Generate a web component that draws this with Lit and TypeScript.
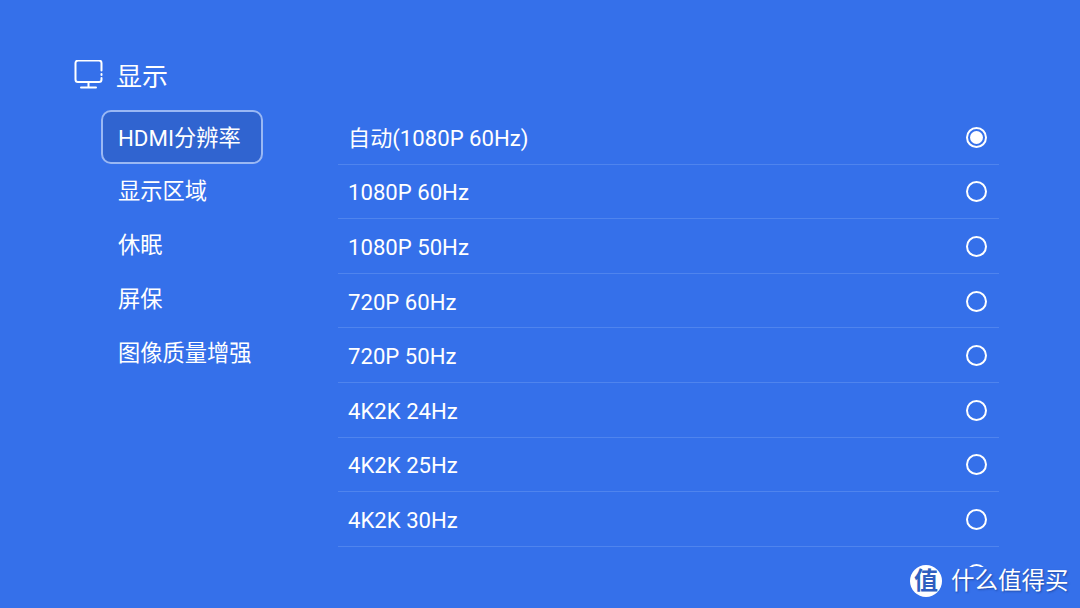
import { LitElement, html, css } from "lit";
import { customElement } from "lit/decorators.js";

const OPTIONS = ["自动(1080P 60Hz)", "1080P 60Hz", "1080P 50Hz", "720P 60Hz", "720P 50Hz", "4K2K 24Hz", "4K2K 25Hz", "4K2K 30Hz"];
const MENU = ["HDMI分辨率", "显示区域", "休眠", "屏保", "图像质量增强"];

@customElement("app-root")
export class AppRoot extends LitElement {
  static styles = css`
    :host {
      display: block;
      position: relative;
      width: 1080px;
      height: 608px;
      overflow: hidden;
      background: #3570ea;
      color: #fff;
      font-family: Roboto, "Noto Sans CJK SC", sans-serif;
      font-size: 22.25px;
    }
    .page { display: flex; flex-direction: column; padding: 58px 0 0 74px; }
    .title { display: flex; align-items: center; gap: 12px; height: 34px; font-size: 26px; }
    .title svg { display: block; }
    .title span { margin-top: -2px; }
    .body { display: flex; margin-top: 18px; }
    .menu { width: 264px; padding-left: 27px; box-sizing: border-box; display: flex; flex-direction: column; }
    .menu div {
      height: 54px; width: 162px; box-sizing: border-box; padding-left: 15px;
      display: flex; align-items: center; border: 2px solid transparent; border-radius: 10px; line-height: 1;
    }
    .menu div.sel { background: #3064d0; border-color: #9ab8f4; padding-top: 2px; }
    .list { width: 661px; display: flex; flex-direction: column; height: 457px; overflow: hidden; }
    .row {
      flex: none; height: 54.6px; box-sizing: border-box; padding: 0 12px 0 10px;
      display: flex; align-items: center; justify-content: space-between;
      border-bottom: 1px solid #4f84ee;
      font-size: 22.15px;
    }
    .label { display: block; height: 26px; line-height: 26px; padding-top: 2px; }
    .radio { flex: none; width: 21px; height: 21px; margin-top: 1px; box-sizing: border-box; border: 2px solid #fff; border-radius: 50%; }
    .radio.on { padding: 2px; }
    .radio.on::before { content: ""; display: block; width: 13px; height: 13px; border-radius: 50%; background: #fff; }
    .mark { position: absolute; left: 910px; top: 565px; display: flex; align-items: center; gap: 9px; font-size: 23.5px; text-shadow: 1px 1px 2px rgba(20,50,120,.6); line-height: 32px; }
    .logo { width: 32px; height: 32px; border-radius: 50%; background: #fff; color: #2f5fc0; font-size: 24px; font-weight: 700; display: flex; align-items: center; justify-content: center; text-shadow: none; }
  `;

  render() {
    return html`
      <div class="page">
        <div class="title">
          <svg width="30" height="30" viewBox="0 0 30 30" fill="none" stroke="#fff" stroke-width="2" stroke-linecap="round">
            <path d="M27.500 10.500V3a2.500 2.500 0 0 0-2.500-2.500H4A2.500 2.500 0 0 0 1.500 3V19.500A2.500 2.500 0 0 0 4 22H25a2.500 2.500 0 0 0 2.500-2.500V18" />
            <path d="M27.500 14v1" />
            <path d="M14.500 22v5M7 27.500h15" />
          </svg>
          <span>显示</span>
        </div>
        <div class="body">
          <div class="menu">${MENU.map((m, i) => html`<div class=${i === 0 ? "sel" : ""}>${m}</div>`)}</div>
          <div class="list">
            ${OPTIONS.map((o, i) => html`<div class="row"><span class="label">${o}</span><span class="radio ${i === 0 ? "on" : ""}"></span></div>`)}
            <div class="row"><span></span><span class="radio"></span></div>
          </div>
        </div>
      </div>
      <div class="mark"><span class="logo">值</span><span>什么值得买</span></div>
    `;
  }
}
